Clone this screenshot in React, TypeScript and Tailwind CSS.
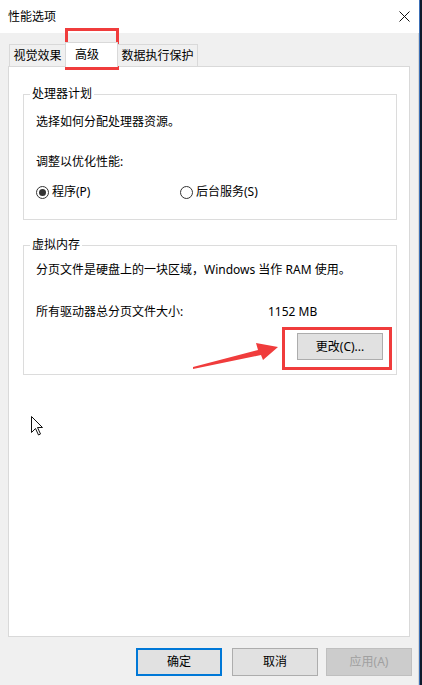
import React from "react";

const font = {
  fontFamily: '"Noto Sans", "Noto Sans CJK SC", sans-serif',
};

function Radio({ checked, label }: { checked?: boolean; label: string }) {
  return (
    <div className="flex h-[16px] items-center">
      <span className="flex h-[13px] w-[13px] items-center justify-center rounded-full border border-[#333333] bg-white">
        {checked ? <span className="h-[7px] w-[7px] rounded-full bg-[#333333]" /> : null}
      </span>
      <span className="ml-[3px] leading-[16px]">{label}</span>
    </div>
  );
}

function Group({ title, children }: { title: string; children: React.ReactNode }) {
  return (
    <fieldset className="ml-[14px] w-[374px] border border-[#dcdcdc] p-0">
      <legend className="ml-[6px] px-[2px] leading-[16px]">{title}</legend>
      {children}
    </fieldset>
  );
}

export default function App() {
  return (
    <div
      className="relative flex h-[685px] w-[422px] overflow-hidden text-[12px] text-black"
      style={font}
    >
      <div className="flex w-[419px] flex-col">
        {/* title bar */}
        <div className="flex h-[33px] items-center bg-white pl-[8px]">
          <span className="leading-[16px]">性能选项</span>
          <svg
            className="ml-auto mr-[9px] h-[11px] w-[11px]"
            viewBox="0 0 11 11"
            fill="none"
            stroke="#111111"
            strokeWidth="1"
          >
            <path d="M0.5 0.5L10.5 10.5M10.5 0.5L0.5 10.5" />
          </svg>
        </div>

        <div className="flex flex-1 flex-col border-r border-[#d6d6d6] bg-[#f0f0f0] pt-[9px]">
          {/* tabs */}
          <div className="relative z-10 ml-[9px] flex items-end">
            <div className="flex h-[22px] w-[57px] items-center justify-center border border-b-0 border-[#d9d9d9] bg-[#f0f0f0] leading-[16px]">
              视觉效果
            </div>
            <div className="-mb-px -ml-px flex h-[25px] w-[53px] items-center border border-b-0 border-[#d9d9d9] bg-white pl-[9px] leading-[16px]">
              高级
            </div>
            <div className="-ml-px flex h-[22px] w-[81px] items-center justify-center border border-b-0 border-[#d9d9d9] bg-[#f0f0f0] leading-[16px]">
              数据执行保护
            </div>
          </div>

          {/* tab page */}
          <div className="ml-[8px] w-[402px] flex-1 border border-[#d9d9d9] bg-white">
            <div className="mt-[19px]">
              <Group title="处理器计划">
                <div className="px-[12px] pb-[19px] pt-[12px]">
                  <p className="leading-[16px]">选择如何分配处理器资源。</p>
                  <p className="mt-[24px] leading-[16px]">调整以优化性能:</p>
                  <div className="mt-[14px] flex">
                    <div className="w-[144px]">
                      <Radio checked label="程序(P)" />
                    </div>
                    <Radio label="后台服务(S)" />
                  </div>
                </div>
              </Group>
            </div>

            <div className="mt-[17px]">
              <Group title="虚拟内存">
                <div className="pb-[14px] pt-[9px]">
                  <p className="px-[12px] leading-[16px]">
                    分页文件是硬盘上的一块区域，Windows 当作 RAM 使用。
                  </p>
                  <div className="mt-[26px] grid grid-cols-[232px_1fr] px-[12px] leading-[16px]">
                    <span>所有驱动器总分页文件大小:</span>
                    <span>1152 MB</span>
                  </div>
                  <div className="mt-[13px] flex justify-end pr-[13px]">
                    <button className="flex h-[27px] w-[86px] items-center justify-center border border-[#adadad] bg-[#e1e1e1] leading-[16px]">
                      更改(C)...
                    </button>
                  </div>
                </div>
              </Group>
            </div>
          </div>

          {/* dialog buttons */}
          <div className="mb-[9px] mt-[11px] flex h-[28px] justify-end gap-[8px] pr-[6px]">
            <button className="mr-[2px] flex w-[86px] items-center justify-center border-2 border-[#0078d7] bg-[#e1e1e1] leading-[16px]">
              确定
            </button>
            <button className="flex w-[86px] items-center justify-center border border-[#adadad] bg-[#e1e1e1] leading-[16px]">
              取消
            </button>
            <button className="flex w-[86px] items-center justify-center border border-[#bfbfbf] bg-[#cccccc] leading-[16px] text-[#a0a0a0]">
              应用(A)
            </button>
          </div>
        </div>
      </div>

      {/* window edge */}
      <div className="w-[3px] border-l border-[#3b6fb6] bg-[#0e1a2b]" />

      {/* annotations */}
      <div className="pointer-events-none absolute left-[65px] top-[28px] h-[42px] w-[54px] border-[3px] border-[#f03c3c]" />
      <div className="pointer-events-none absolute left-[282px] top-[327px] h-[43px] w-[110px] border-[3px] border-[#f03c3c]" />
      <svg
        className="pointer-events-none absolute left-0 top-0"
        width="422"
        height="685"
        viewBox="0 0 422 685"
      >
        <polygon
          points="193,367 258,350 256,343 278,347 263,360 261,355 193,369"
          fill="#f03c3c"
        />
      </svg>

      {/* mouse pointer */}
      <svg
        className="pointer-events-none absolute left-[31px] top-[416px]"
        width="13"
        height="20"
        viewBox="0 0 13 20"
      >
        <path
          d="M0.5 0.5L0.5 16.5L4.5 12.5L7.5 19L9.5 18L6.5 11.5L11.5 11.5Z"
          fill="#ffffff"
          stroke="#111111"
          strokeWidth="1"
          strokeLinejoin="miter"
        />
      </svg>
    </div>
  );
}
